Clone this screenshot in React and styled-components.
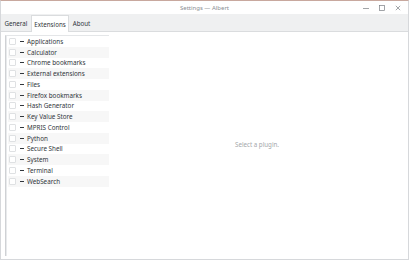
import React from "react";
import styled, { createGlobalStyle } from "styled-components";

const Global = createGlobalStyle`
  html, body { margin: 0; padding: 0; background: #fff; }
  body { font-family: "Noto Sans", "DejaVu Sans", sans-serif; }
`;

const Window = styled.div`
  width: 409px;
  height: 260px;
  box-sizing: border-box;
  display: flex;
  flex-direction: column;
  border: 1px solid #d6d8db;
  border-top: 1px solid #c8a89e;
  background: #fff;
  overflow: hidden;
`;

const TitleBar = styled.div`
  height: 13px;
  flex: none;
  display: flex;
  align-items: center;
  justify-content: center;
  position: relative;
  background: #fff;
  font-size: 6px;
  color: #8a8e93;
`;

const Controls = styled.div`
  position: absolute;
  right: 6px;
  top: 0;
  height: 13px;
  display: flex;
  align-items: center;
  gap: 8px;
`;

const Tabs = styled.div`
  height: 17px;
  flex: none;
  display: flex;
  align-items: flex-end;
  padding-left: 0;
  background: #eff0f1;
  border-bottom: 1px solid #dadcde;
`;

const Tab = styled.div`
  height: ${(p) => (p.$active ? "16px" : "15px")};
  display: flex;
  align-items: center;
  padding: 0 2.5px;
  font-size: 6.2px;
  color: #31363b;
  background: ${(p) => (p.$active ? "#fff" : "transparent")};
  border: 1px solid ${(p) => (p.$active ? "#dadcde" : "transparent")};
  border-bottom: none;
  margin-bottom: ${(p) => (p.$active ? "-1px" : "0")};
`;

const Body = styled.div`
  flex: 1;
  display: flex;
  padding: 3px 3px 3px 4px;
`;

const ListFrame = styled.div`
  width: 101px;
  flex: none;
  border-left: 1px solid #cfd1d4;
  border-top: 1px solid #e4e6e8;
  box-shadow: inset 1px 0 0 #e8eaec;
  padding: 0 0 0 2px;
`;

const Row = styled.div`
  height: 10.75px;
  display: flex;
  align-items: center;
  background: ${(p) => (p.$alt ? "#f7f7f7" : "#fff")};
  font-size: 6.3px;
  color: #31363b;
`;

const Check = styled.span`
  width: 7px;
  height: 7px;
  box-sizing: border-box;
  border: 1px solid #dfe1e3;
  border-radius: 1px;
  margin-left: 1px;
  background: #fff;
`;

const Dash = styled.span`
  width: 4px;
  height: 1px;
  background: #31363b;
  margin: 0 3px 0 4px;
`;

const Placeholder = styled.div`
  flex: 1;
  display: flex;
  align-items: center;
  justify-content: center;
  font-size: 6.2px;
  color: #a4a7aa;
  padding-bottom: 2px;
`;

const plugins = [
  "Applications",
  "Calculator",
  "Chrome bookmarks",
  "External extensions",
  "Files",
  "Firefox bookmarks",
  "Hash Generator",
  "Key Value Store",
  "MPRIS Control",
  "Python",
  "Secure Shell",
  "System",
  "Terminal",
  "WebSearch",
];

export default function App() {
  return (
    <>
      <Global />
      <Window>
        <TitleBar>
          Settings — Albert
          <Controls>
            <svg width="8" height="8" viewBox="0 0 8 8">
              <path d="M1 4.5h6" stroke="#7a7e83" strokeWidth="0.7" />
            </svg>
            <svg width="8" height="8" viewBox="0 0 8 8">
              <rect x="1.5" y="1.5" width="5" height="5" fill="none" stroke="#7a7e83" strokeWidth="0.7" />
            </svg>
            <svg width="8" height="8" viewBox="0 0 8 8">
              <path d="M1.8 1.8l4.4 4.4M6.2 1.8l-4.4 4.4" stroke="#7a7e83" strokeWidth="0.7" />
            </svg>
          </Controls>
        </TitleBar>
        <Tabs>
          <Tab>General</Tab>
          <Tab $active>Extensions</Tab>
          <Tab>About</Tab>
        </Tabs>
        <Body>
          <ListFrame>
            {plugins.map((p, i) => (
              <Row key={p} $alt={i % 2 === 1}>
                <Check />
                <Dash />
                {p}
              </Row>
            ))}
          </ListFrame>
          <Placeholder>Select a plugin.</Placeholder>
        </Body>
      </Window>
    </>
  );
}
